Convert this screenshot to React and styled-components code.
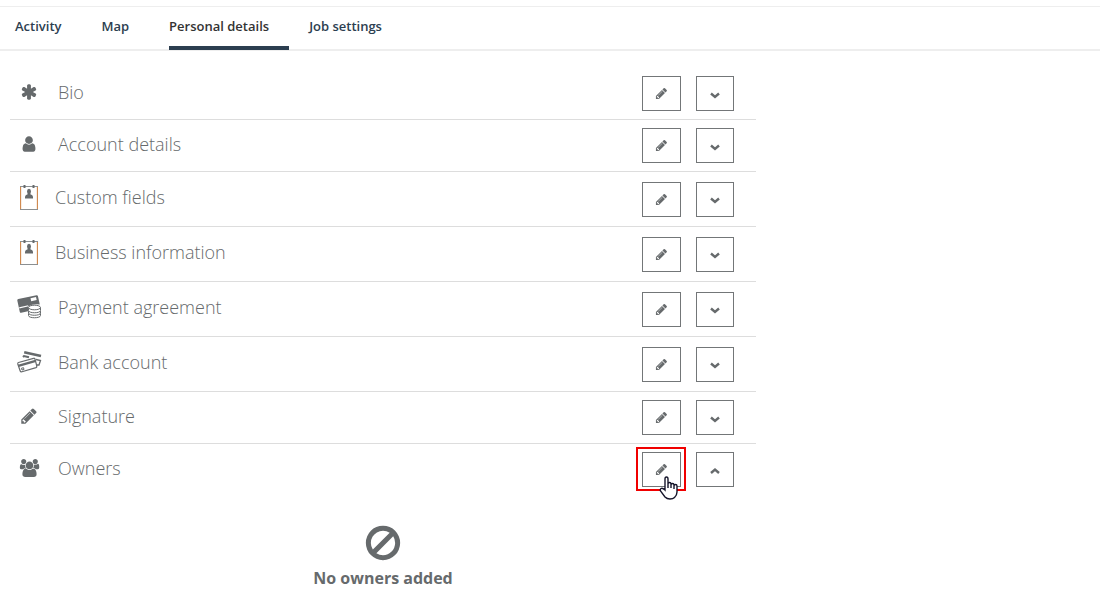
import React from 'react'
import styled, { createGlobalStyle } from 'styled-components'

const paths = {
    asterisk: 'M1546 1050q46 26 59.5 77.5t-12.5 97.500l-64 110q-26 46-77.500 59.500t-97.500-12.500l-266-153v307q0 52-38 90t-90 38h-128q-52 0-90-38t-38-90v-307l-266 153q-46 26-97.500 12.500t-77.500-59.500l-64-110q-26-46-12.500-97.500t59.500-77.500l266-154-266-154q-46-26-59.500-77.500t12.500-97.500l64-110q26-46 77.500-59.500t97.500 12.500l266 153v-307q0-52 38-90t90-38h128q52 0 90 38t38 90v307l266-153q46-26 97.500-12.500t77.500 59.500l64 110q26 46 12.500 97.500t-59.500 77.500l-266 154z',
    user: 'M1536 1399q0 109-62.500 187t-150.500 78h-854q-88 0-150.500-78t-62.500-187q0-85 8.500-160.500t31.500-152 58.500-131 94-89 134.500-34.500q131 128 313 128t313-128q76 0 134.500 34.500t94 89 58.500 131 31.500 152 8.500 160.500zm-256-887q0 159-112.500 271.500t-271.500 112.500-271.500-112.500-112.500-271.500 112.500-271.500 271.500-112.500 271.500 112.500 112.500 271.500z',
    pencil: 'M491 1536l91-91-235-235-91 91v107h128v128h107zm523-928q0-22-22-22-10 0-17 7l-542 542q-7 7-7 17 0 22 22 22 10 0 17-7l542-542q7-7 7-17zm-54-192l416 416-832 832h-416v-416zm683 96q0 53-37 90l-166 166-416-416 166-165q36-38 90-38 53 0 91 38l235 234q37 39 37 91z',
    users: 'M657 896q-162 5-265 128h-134q-82 0-138-40.500t-56-118.500q0-353 124-353 6 0 43.500 21t97.500 42.500 119 21.500q67 0 133-23-5 37-5 66 0 159 93 287zm1071 637q0 120-73 189.500t-194 69.500h-874q-121 0-194-69.500t-73-189.500q0-53 3.500-103.500t14-109 26.500-108.500 43-97.500 62-81 85.500-53.500 111.500-20q10 0 43 21.500t73 48 107 48 135 21.500 135-21.500 107-48 73-48 43-21.500q61 0 111.500 20t85.500 53.500 62 81 43 97.500 26.500 108.500 14 109 3.500 103.500zm-1024-1277q0 106-75 181t-181 75-181-75-75-181 75-181 181-75 181 75 75 181zm704 384q0 159-112.500 271.500t-271.500 112.500-271.500-112.500-112.500-271.500 112.500-271.500 271.500-112.500 271.500 112.500 112.500 271.500zm576 225q0 78-56 118.500t-138 40.500h-134q-103-123-265-128 93-128 93-287 0-29-5-66 66 23 133 23 59 0 119-21.500t97.500-42.500 43.500-21q124 0 124 353zm-128-609q0 106-75 181t-181 75-181-75-75-181 75-181 181-75 181 75 75 181z',
    ban: 'M1440 893q0-161-87-295l-754 753q137 89 297 89 111 0 211.500-43.500t173.500-116.500 116-174.500 43-212.500zm-999 299l755-754q-135-91-300-91-148 0-273 73t-198 199-73 274q0 162 89 299zm1223-299q0 157-61 300t-163.500 246-245 164-298.500 61-298.500-61-245-164-163.500-246-61-300 61-299.500 163.500-245.500 245-164 298.500-61 298.500 61 245 164 163.500 245.500 61 299.500z'
}

const Glyph = ({ name, size = 18 }) => (
    <svg
        width={name === 'users' ? Math.round(size * 8 / 7) : size}
        height={size}
        viewBox={name === 'users' ? '0 0 2048 1792' : '0 0 1792 1792'}
        fill="currentColor"
        aria-hidden="true"
    >
        <path d={paths[name]} />
    </svg>
)

const Badge = () => (
    <svg width="18" height="26" viewBox="0 0 18 26" fill="none" aria-hidden="true">
        <path d="M.5 2V25.500M17.500 2V25.500" stroke="#d08a50" strokeWidth="1.300" />
        <path d="M0 2.500H18M0 25.500H18" stroke="#8b8f91" />
        <path d="M4.500 1V4M13.500 1V4" stroke="#666a6c" strokeWidth="2" />
        <ellipse cx="9" cy="7.500" rx="2" ry="2.700" fill="#666a6c" />
        <path d="M5 14.500V12.500Q5 11 8 10H10Q13 11 13 12.500V14.500Z" fill="#666a6c" />
    </svg>
)

const CardCoins = () => (
    <svg width="26" height="26" viewBox="0 0 26 26" aria-hidden="true">
        <path d="M1.300 6.500Q1.100 5.300 2.300 5L20.500 1.200Q21.600 1 21.900 2L23.800 10.500Q17 9.500 12 12.500L12 17.300L5.200 18.800Q4.100 19 3.800 17.900Z" fill="#666a6c" />
        <path d="M14.500 4.200L20 3L20.700 6L15.200 7.200ZM3.100 13.200L12.300 11.200L11.800 12.500L3.400 14.400Z" fill="#fff" />
        <g fill="#fff" stroke="#666a6c">
            <path d="M12.500 19.500V21.500C12.500 24.500 24.500 24.500 24.500 21.500V19.500" />
            <path d="M12.500 17V19C12.500 22 24.500 22 24.500 19V17" />
            <path d="M12.500 13.500V16.500C12.500 19.500 24.500 19.500 24.500 16.500V13.500" />
            <ellipse cx="18.500" cy="13.500" rx="6" ry="2.300" />
        </g>
    </svg>
)

const BankCards = () => (
    <svg width="26" height="26" viewBox="0 0 26 26" fill="none" stroke="#666a6c" aria-hidden="true">
        <path d="M8.200 3.200L25 7" strokeWidth="2.600" />
        <path d="M7 8L8 7L13 8.300" strokeWidth="2" />
        <path d="M20 10.500L24.500 11.500L23 16L20.500 16" strokeWidth="1.300" />
        <path d="M2.500 13.500L17.500 9.300Q18.700 9 19 10.200L20.800 17Q21 18.200 20 18.600L6 22.800Q4.600 23.200 4.200 22L1.800 15Q1.500 13.800 2.500 13.500Z" fill="#fff" strokeWidth="1.200" />
        <path d="M2.300 16.800L19.700 11.800" strokeWidth="2.400" />
        <path d="M5.500 19.200L7.500 18.700L8 20.500L6 21Z" strokeWidth="1" />
    </svg>
)

const Chevron = ({ up }) => (
    <svg width="12" height="12" viewBox="0 0 12 12" fill="none" stroke="currentColor" strokeWidth="2.400" aria-hidden="true">
        <path d={up ? 'M2 9L6 5.500L10 9' : 'M2 5.500L6 9L10 5.500'} />
    </svg>
)

const sections = [
    { title: 'Bio', icon: <Glyph name="asterisk" /> },
    { title: 'Account details', icon: <Glyph name="user" /> },
    { title: 'Custom fields', icon: <Badge />, tall: true, gap: 7 },
    { title: 'Business information', icon: <Badge />, tall: true, gap: 7 },
    { title: 'Payment agreement', icon: <CardCoins />, tall: true },
    { title: 'Bank account', icon: <BankCards />, tall: true },
    { title: 'Signature', icon: <Glyph name="pencil" /> },
    { title: 'Owners', icon: <Glyph name="users" />, open: true }
]

const tabs = ['Activity', 'Map', 'Personal details', 'Job settings']

const App = () => {
    return (
        <>
            <GlobalStyle />
            <TabBar>
                {tabs.map((tab) => (
                    <Tab href="#" key={tab} $active={tab === 'Personal details'}>{tab}</Tab>
                ))}
            </TabBar>
            <Details>
                {sections.map(({ title, icon, tall, gap, open }) => (
                    <Row key={title} $tall={tall} $open={open}>
                        <Heading $gap={gap}>
                            <IconSlot>{icon}</IconSlot>
                            <Title>{title}</Title>
                        </Heading>
                        <Actions>
                            <EditWrap>
                                <Button $edit aria-label={`Edit ${title}`}>
                                    <Glyph name="pencil" size={13} />
                                </Button>
                                {open && <Highlight />}
                                {open && <Pointer />}
                            </EditWrap>
                            <Button aria-label={`Toggle ${title}`} aria-expanded={!!open}>
                                <Chevron up={open} />
                            </Button>
                        </Actions>
                    </Row>
                ))}
                <Empty>
                    <Glyph name="ban" size={40} />
                    <EmptyText>No owners added</EmptyText>
                </Empty>
            </Details>
        </>
    )
}

const Pointer = () => (
    <Hand width="20" height="24" viewBox="0 0 20 24" aria-hidden="true">
        <path
            d="M6 14V3Q6 1 7.500 1T9 3V8Q9 6.500 10.500 6.500T12 8V9Q12 7.500 13.500 7.500T15 9V10Q15 8.500 16.500 8.500T18 10V16Q18 19 15.500 21.500Q14 23 11 23Q8 23 6 21L1.500 15Q.8 13.500 2 12.500Q3.500 11.500 6 14Z"
            fill="#fff"
            stroke="#15152a"
            strokeWidth="1.400"
        />
        <path d="M9 8V12M12 9V12M15 10V13" stroke="#15152a" strokeWidth="1.400" />
    </Hand>
)

export default App

const GlobalStyle = createGlobalStyle`
    body {
        margin: 0;
        background: #fff;
        color: #666a6c;
        font-family: "Open Sans", "Noto Sans", sans-serif;
    }
    * {
        box-sizing: border-box;
    }
    svg {
        display: block;
        flex: none;
    }
`

const TabBar = styled.nav`
    display: flex;
    gap: 20px;
    margin-top: 6px;
    padding: 0 15px;
    border-top: 1px solid #eee;
    border-bottom: 2px solid #eee;
`

const Tab = styled.a`
    height: 42px;
    padding: 9px 20px 0 0;
    border-bottom: 3px solid ${({ $active }) => ($active ? '#2c3e50' : 'transparent')};
    color: ${({ $active }) => ($active ? '#333' : '#2c3e50')};
    font-size: 13px;
    font-weight: 600;
    line-height: 20px;
    text-decoration: none;
    white-space: nowrap;
    ${({ $active }) => $active && 'box-shadow: 0 1px #2c3e50;'}
`

const Details = styled.main`
    max-width: 746px;
    margin: 17px 10px 0;
`

const Row = styled.section`
    display: flex;
    align-items: center;
    height: ${({ $tall }) => ($tall ? '55px' : '52px')};
    padding-right: 22px;
    border-bottom: 1px solid ${({ $open }) => ($open ? 'transparent' : '#ddd')};
`

const Heading = styled.div`
    display: flex;
    align-items: center;
    gap: ${({ $gap = 10 }) => $gap}px;
    padding-bottom: 4px;
`

const IconSlot = styled.span`
    display: flex;
    flex: none;
    width: 38px;
    justify-content: center;
`

const Title = styled.h2`
    margin: 0;
    font-size: 18px;
    font-weight: 300;
    line-height: 24px;
`

const Actions = styled.div`
    display: flex;
    gap: 15px;
    margin-left: auto;
`

const EditWrap = styled.div`
    position: relative;
`

const Button = styled.button`
    display: flex;
    align-items: center;
    justify-content: center;
    width: ${({ $edit }) => ($edit ? '39px' : '38px')};
    height: 35px;
    padding: 0;
    border: 1px solid #737678;
    background: #fff;
    color: #666a6c;
    cursor: pointer;
`

const Highlight = styled.span`
    position: absolute;
    inset: -5px -5px -4px -6px;
    border: 2px solid #f00000;
    pointer-events: none;
`

const Hand = styled.svg`
    position: absolute;
    left: 17px;
    top: 24px;
    pointer-events: none;
`

const Empty = styled.div`
    display: flex;
    flex-direction: column;
    align-items: center;
    padding-top: 27px;
`

const EmptyText = styled.p`
    margin: 3px 0 0;
    font-size: 16px;
    font-weight: 700;
    line-height: 24px;
`
